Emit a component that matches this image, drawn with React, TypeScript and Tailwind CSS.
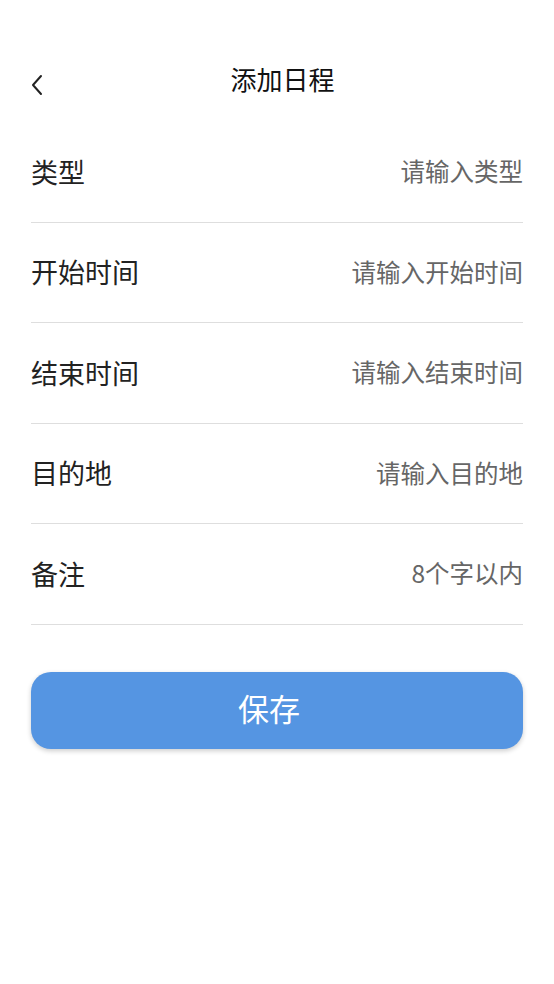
import React from "react";

const rows = [
  { label: "类型", ph: "请输入类型" },
  { label: "开始时间", ph: "请输入开始时间" },
  { label: "结束时间", ph: "请输入结束时间" },
  { label: "目的地", ph: "请输入目的地" },
  { label: "备注", ph: "8个字以内" },
];

export default function App() {
  return (
    <div
      className="min-h-[984px] w-full bg-white"
      style={{ fontFamily: '"Noto Sans CJK SC", "Noto Sans", sans-serif' }}
    >
      <div className="relative flex h-[122px] items-start justify-center pl-[11px] pt-[57px]">
        <svg
          className="absolute left-[29px] top-[73px]"
          width="16"
          height="24"
          viewBox="0 0 16 24"
          fill="none"
          stroke="#222"
          strokeWidth="2"
          strokeLinecap="round"
          strokeLinejoin="round"
        >
          <polyline points="12,3 4,12 12,21" />
        </svg>
        <span className="text-[26px] leading-[44px] text-[#111]">添加日程</span>
      </div>
      <div className="px-[31px]">
        {rows.map((r) => (
          <div
            key={r.label}
            className="flex h-[100.5px] items-center justify-between border-b border-[#dedede]"
          >
            <span className="text-[27px] text-[#222]">{r.label}</span>
            <span className="text-[24.5px] text-[#666]">{r.ph}</span>
          </div>
        ))}
        <button className="mt-[47px] flex h-[77px] w-full items-center justify-center rounded-[20px] bg-[#5595e2] pb-[3px] pr-[16px] text-[31px] text-white shadow-[0_2px_5px_rgba(0,0,0,0.2)]">
          保存
        </button>
      </div>
    </div>
  );
}
